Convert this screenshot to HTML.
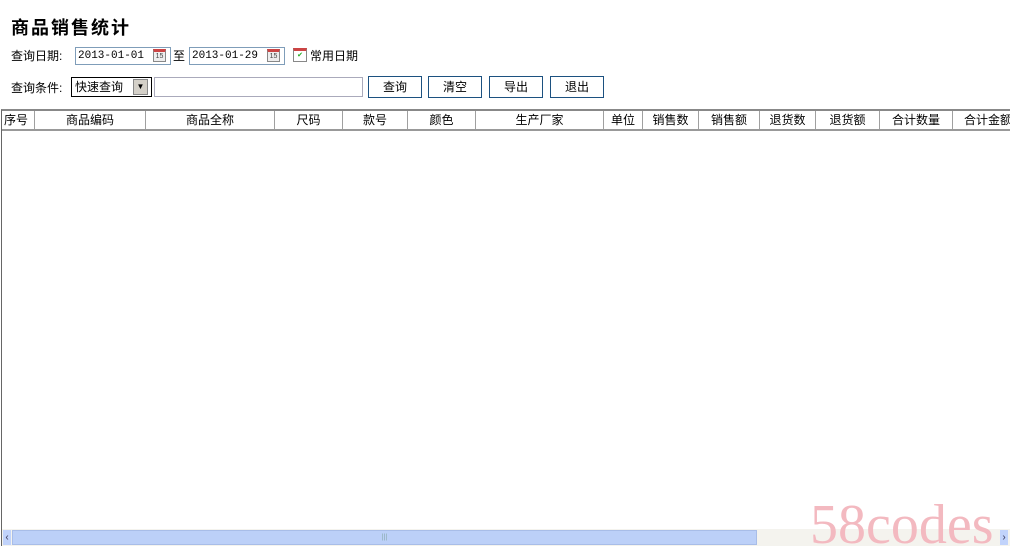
<!DOCTYPE html><html><head><meta charset="utf-8"><style>
body{margin:0;width:1010px;height:553px;background:#fff;position:relative;overflow:hidden;font-family:"Liberation Sans","SimSun","Noto Sans CJK SC",sans-serif;font-size:12px;color:#000}
.a{position:absolute}
.in{position:absolute;border:1px solid #7f9db9;background:#fff;height:18px;box-sizing:border-box;font-size:11px;line-height:16px;padding-left:2px;font-family:"Liberation Mono",monospace}
.btn{position:absolute;top:76px;width:54px;height:22px;box-sizing:border-box;border:1px solid #1c5180;background:#fff;text-align:center;line-height:20px}
.cal{position:absolute;width:13px;height:13px;border:1px solid #888;box-sizing:border-box;background:#eee;font-size:7px;line-height:10px;text-align:center;color:#444;border-top:3px solid #c44}
.h{position:absolute;top:111px;height:18px;line-height:18px;text-align:center;border-right:1px solid #a0a0a0;box-sizing:border-box}
</style></head><body>
<div class="a" style="left:11px;top:14px;font-size:18px;font-weight:bold;font-family:'Noto Sans CJK SC',sans-serif;letter-spacing:2px">商品销售统计</div>
<div class="a" style="left:11px;top:47px">查询日期:</div>
<div class="in" style="left:75px;top:47px;width:96px">2013-01-01</div><div class="cal" style="left:153px;top:49px">15</div>
<div class="a" style="left:173px;top:47px">至</div>
<div class="in" style="left:189px;top:47px;width:96px">2013-01-29</div><div class="cal" style="left:267px;top:49px">15</div>
<div class="cal" style="left:293px;top:48px;width:14px;height:14px;background:#fff;color:#2a2">✔</div>
<div class="a" style="left:310px;top:47px">常用日期</div>
<div class="a" style="left:11px;top:79px">查询条件:</div>
<div class="a" style="left:71px;top:77px;width:81px;height:20px;border:1px solid #000;box-sizing:border-box;line-height:18px;padding-left:3px">快速查询<span class="a" style="left:61px;top:1px;width:15px;height:16px;background:#d4d0c8;border:1px solid #888;box-sizing:border-box;font-size:8px;text-align:center;line-height:14px">▼</span></div>
<div class="a" style="left:154px;top:77px;width:209px;height:20px;border:1px solid #aab;box-sizing:border-box"></div>
<div class="btn" style="left:368px">查询</div><div class="btn" style="left:428px">清空</div><div class="btn" style="left:489px">导出</div><div class="btn" style="left:550px">退出</div>
<div class="a" style="left:1px;top:109px;width:1010px;height:437px;border-left:1px solid #666;border-top:2px solid #888;box-sizing:border-box"></div>
<div class="a" style="left:2px;top:129px;width:1008px;height:2px;background:#999"></div>
<div class="h" style="left:2px;width:33px;text-align:left;padding-left:2px">序号</div>
<div class="h" style="left:35px;width:111px">商品编码</div>
<div class="h" style="left:146px;width:129px">商品全称</div>
<div class="h" style="left:275px;width:68px">尺码</div>
<div class="h" style="left:343px;width:65px">款号</div>
<div class="h" style="left:408px;width:68px">颜色</div>
<div class="h" style="left:476px;width:128px">生产厂家</div>
<div class="h" style="left:604px;width:39px">单位</div>
<div class="h" style="left:643px;width:56px">销售数</div>
<div class="h" style="left:699px;width:61px">销售额</div>
<div class="h" style="left:760px;width:56px">退货数</div>
<div class="h" style="left:816px;width:64px">退货额</div>
<div class="h" style="left:880px;width:73px">合计数量</div>
<div class="h" style="left:953px;width:70px;border:0">合计金额</div>
<div class="a" style="left:2px;top:529px;width:1008px;height:17px;background:#f4f3ee"></div>
<div class="a" style="left:3px;top:530px;width:8px;height:15px;background:#c1d3fb;color:#335;font-size:10px;line-height:15px;text-align:center">‹</div>
<div class="a" style="left:12px;top:530px;width:745px;height:15px;background:#bcd0f8;border:1px solid #a8bde8;box-sizing:border-box;text-align:center;font-size:7px;line-height:13px;color:#8aa">|||</div>
<div class="a" style="left:1000px;top:530px;width:8px;height:15px;background:#c1d3fb;color:#335;font-size:10px;line-height:15px;text-align:center">›</div>
<div class="a" style="left:810px;top:495px;font-family:'Liberation Serif',serif;font-size:56px;color:#f3b9c0;line-height:60px">58codes</div>
</body></html>
